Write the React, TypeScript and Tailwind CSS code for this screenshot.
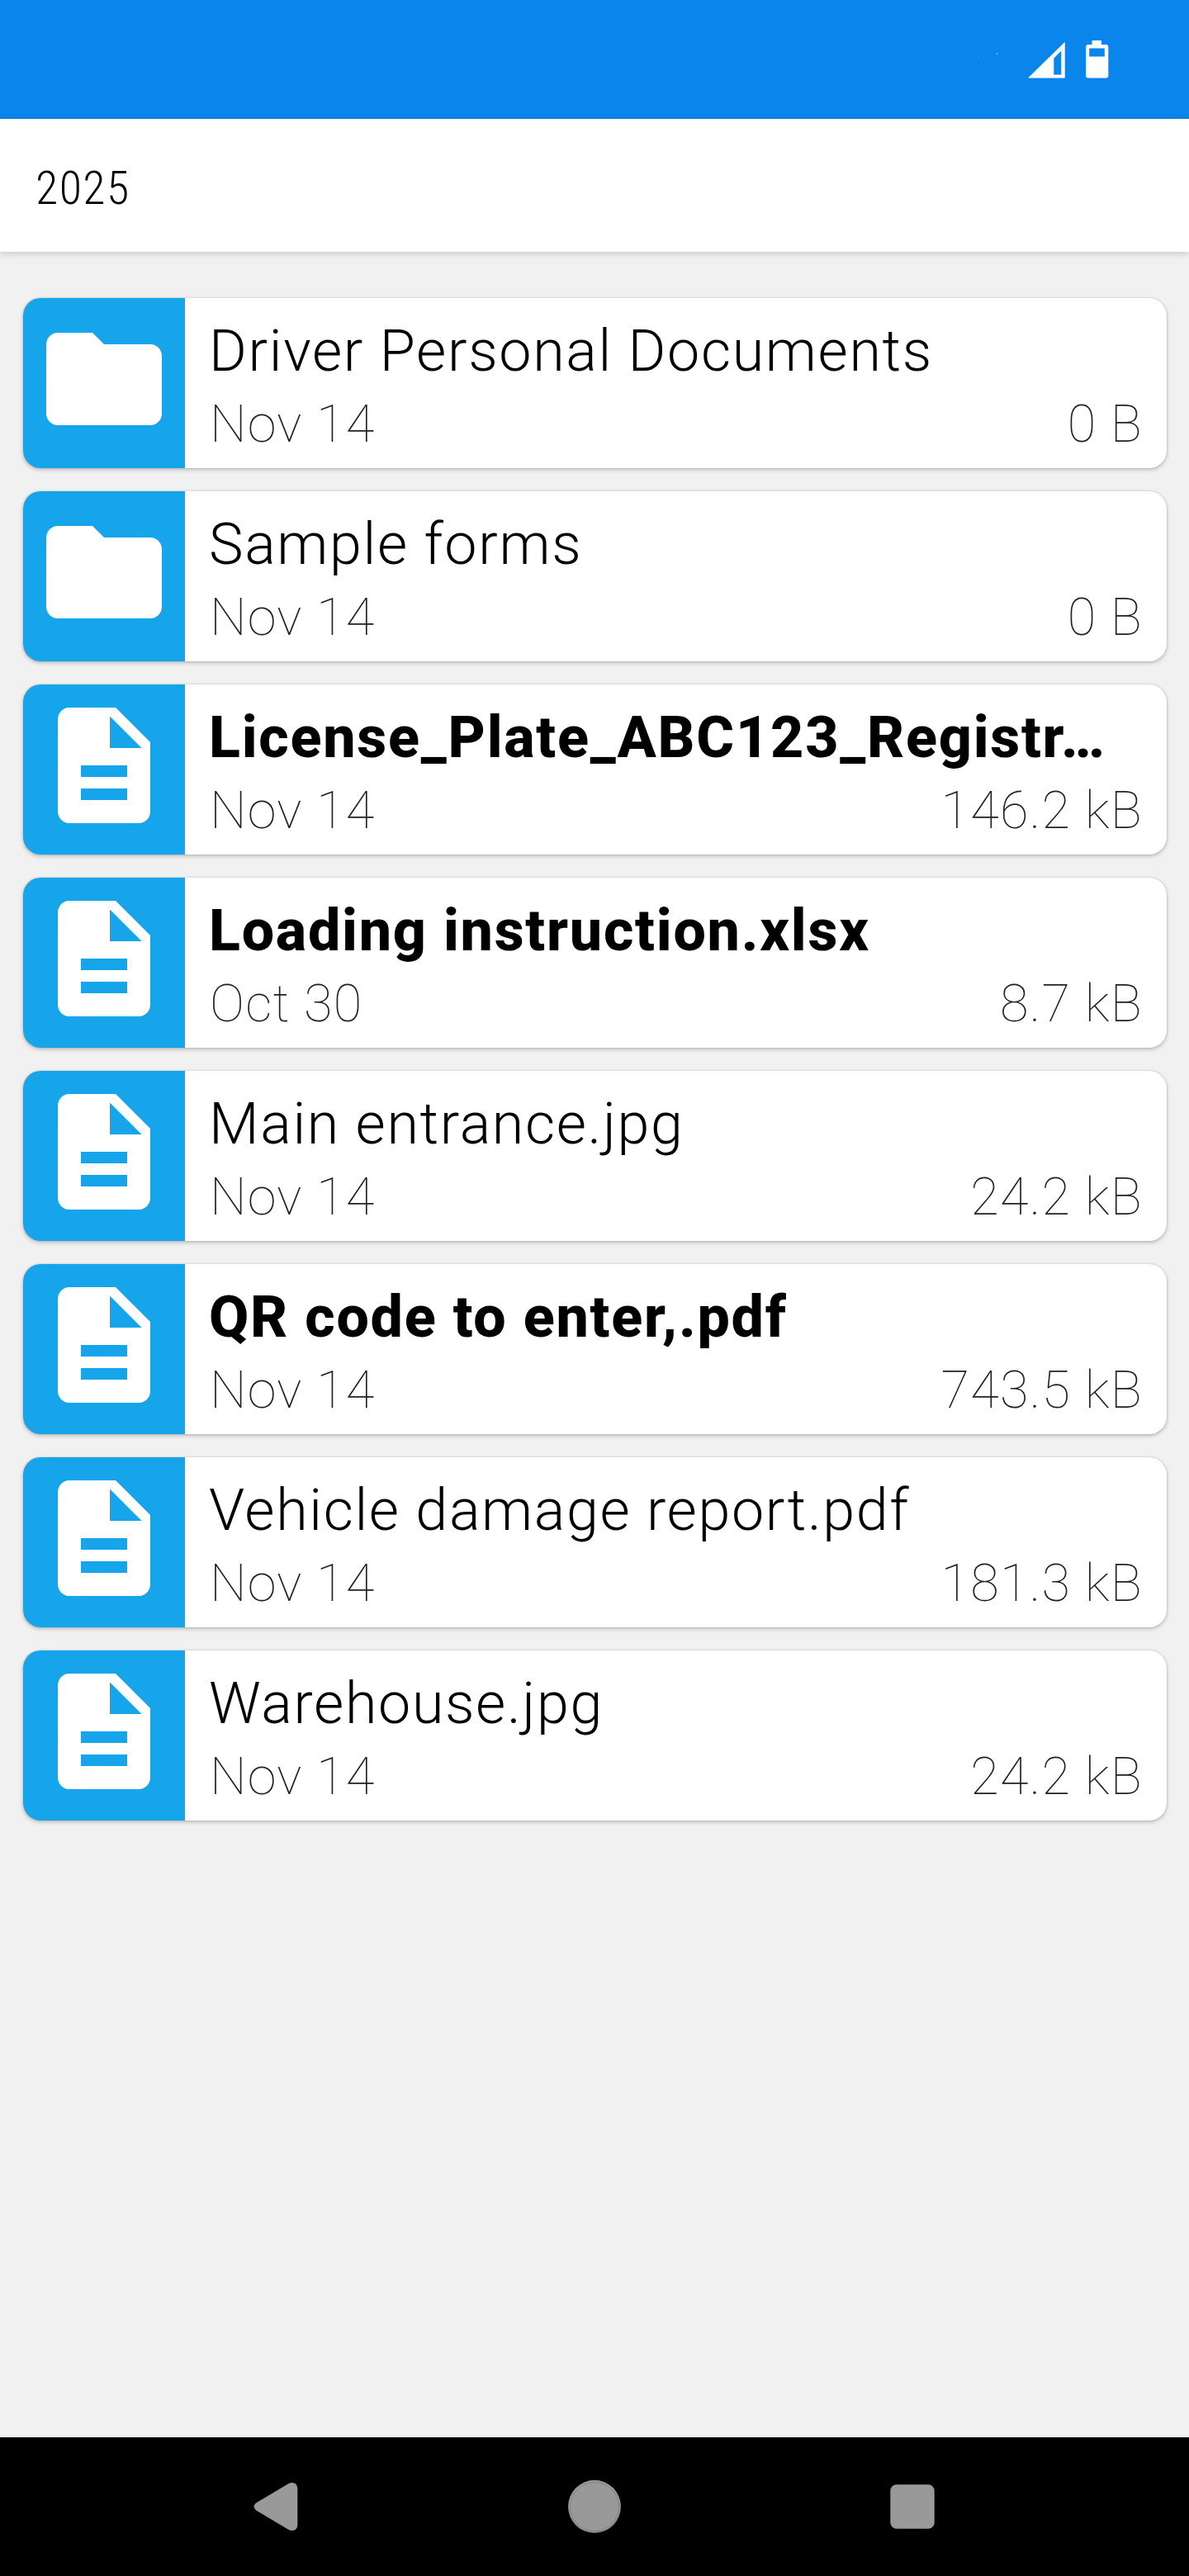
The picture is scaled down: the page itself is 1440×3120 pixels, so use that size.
import React from 'react';

interface Entry {
  name: string;
  date: string;
  size: string;
  folder?: boolean;
  unread?: boolean;
}

const entries: Entry[] = [
  { name: 'Driver Personal Documents', date: 'Nov 14', size: '0 B', folder: true },
  { name: 'Sample forms', date: 'Nov 14', size: '0 B', folder: true },
  { name: 'License_Plate_ABC123_Registr…', date: 'Nov 14', size: '146.2 kB', unread: true },
  { name: 'Loading instruction.xlsx', date: 'Oct 30', size: '8.7 kB', unread: true },
  { name: 'Main entrance.jpg', date: 'Nov 14', size: '24.2 kB' },
  { name: 'QR code to enter,.pdf', date: 'Nov 14', size: '743.5 kB', unread: true },
  { name: 'Vehicle damage report.pdf', date: 'Nov 14', size: '181.3 kB' },
  { name: 'Warehouse.jpg', date: 'Nov 14', size: '24.2 kB' },
];

const FolderIcon = () => (
  <svg viewBox="0 0 24 24" className="w-[168px] h-[168px]" fill="white">
    <path d="M10 4H4c-1.1 0-1.99.9-1.99 2L2 18c0 1.1.9 2 2 2h16c1.1 0 2-.9 2-2V8c0-1.1-.9-2-2-2h-8l-2-2z" />
  </svg>
);

const FileIcon = () => (
  <svg viewBox="0 0 24 24" className="w-[168px] h-[168px]" fill="white">
    <path d="M14 2H6c-1.1 0-1.99.9-1.99 2L4 20c0 1.1.89 2 1.99 2H18c1.1 0 2-.9 2-2V8l-6-6zm2 16H8v-2h8v2zm0-4H8v-2h8v2zm-3-5V3.5L18.5 9H13z" />
  </svg>
);

const StatusBar = () => (
  <div className="h-[144px] shrink-0 bg-[#0a85eb] flex justify-end items-center pr-[97px]">
    <svg viewBox="1180 40 163 64" className="w-[163px] h-[64px]" fill="white">
      <circle cx="1185.5" cy="68" r="0.8" opacity="0.35" />
      <circle cx="1207.5" cy="65" r="1" opacity="0.5" />
      {/* signal */}
      <path
        fillRule="evenodd"
        d="M1289.7 50.7V94.5H1245L1289.7 50.7zM1276.3 70.5V90.5H1285.2V61.7z"
      />
      {/* battery */}
      <path
        fillRule="evenodd"
        d="M1322.5 49H1334V54H1339.3a3 3 0 0 1 3 3V91.5a3 3 0 0 1-3 3H1318a3 3 0 0 1-3-3V57a3 3 0 0 1 3-3H1322.5zM1319.2 58.4V68.5H1337.8V58.4z"
      />
    </svg>
  </div>
);

const EntryCard: React.FC<{ entry: Entry }> = ({ entry }) => (
  <div className="flex h-[206px] bg-white rounded-[21px] overflow-hidden shadow-[0_0_2px_rgba(0,0,0,0.2),0_2px_5px_rgba(0,0,0,0.22)]">
    <div className="w-[196px] shrink-0 bg-[#16a4ea] flex justify-center items-start pt-[14px]">
      {entry.folder ? <FolderIcon /> : <FileIcon />}
    </div>
    <div className="flex-1 min-w-0 pl-[29px] pr-[29px] pt-[22px]">
      <div
        className={
          entry.unread
            ? 'truncate text-[70px] leading-[84px] tracking-[1.75px] font-extrabold'
            : 'truncate text-[70px] leading-[84px] tracking-[1.65px] font-light'
        }
      >
        {entry.name}
      </div>
      <div className="flex justify-between pl-px text-[63px] leading-[94px] tracking-[1.26px] font-thin text-[#202124]">
        <span>{entry.date}</span>
        <span>{entry.size}</span>
      </div>
    </div>
  </div>
);

const NavBar = () => (
  <nav className="h-[168px] shrink-0 bg-black flex items-center justify-between pl-[302px] pr-[303px]">
    <svg viewBox="0 0 64 64" className="w-16 h-16" fill="#999">
      <path d="M8.2 27.5L47.6 4Q52 1.8 55.5 4Q58.3 6 58.3 9.5V54.5Q58.3 58 55.5 60Q52 62.2 47.6 60L8.2 36.5Q5.6 34.5 5.6 32T8.2 27.5z" />
    </svg>
    <svg viewBox="0 0 64 64" className="w-16 h-16">
      <circle cx="32" cy="32" r="32" fill="#777" />
      <circle cx="32" cy="31.5" r="31.5" fill="#999" />
      <circle cx="32" cy="32" r="29.6" fill="none" stroke="#7c7c7c" strokeWidth="0.8" />
    </svg>
    <svg viewBox="0 0 64 64" className="w-16 h-16" fill="#999">
      <rect x="5.3" y="5.3" width="53.4" height="53.4" rx="7.5" />
    </svg>
  </nav>
);

export default function App() {
  return (
    <div className="w-[1440px] h-[3120px] flex flex-col bg-[#f1f1f1] font-['Roboto',sans-serif] text-black">
      <StatusBar />
      <header className="relative h-[161px] shrink-0 bg-white pl-[43px] pt-[7px] flex items-center text-[56px] font-light [font-stretch:75%] tracking-[1.4px] shadow-[0_2px_8px_rgba(0,0,0,0.18)]">
        2025
      </header>
      <main className="flex-1 pl-7 pr-[27px] pt-14 flex flex-col gap-7">
        {entries.map((entry) => (
          <EntryCard key={entry.name} entry={entry} />
        ))}
      </main>
      <NavBar />
    </div>
  );
}
